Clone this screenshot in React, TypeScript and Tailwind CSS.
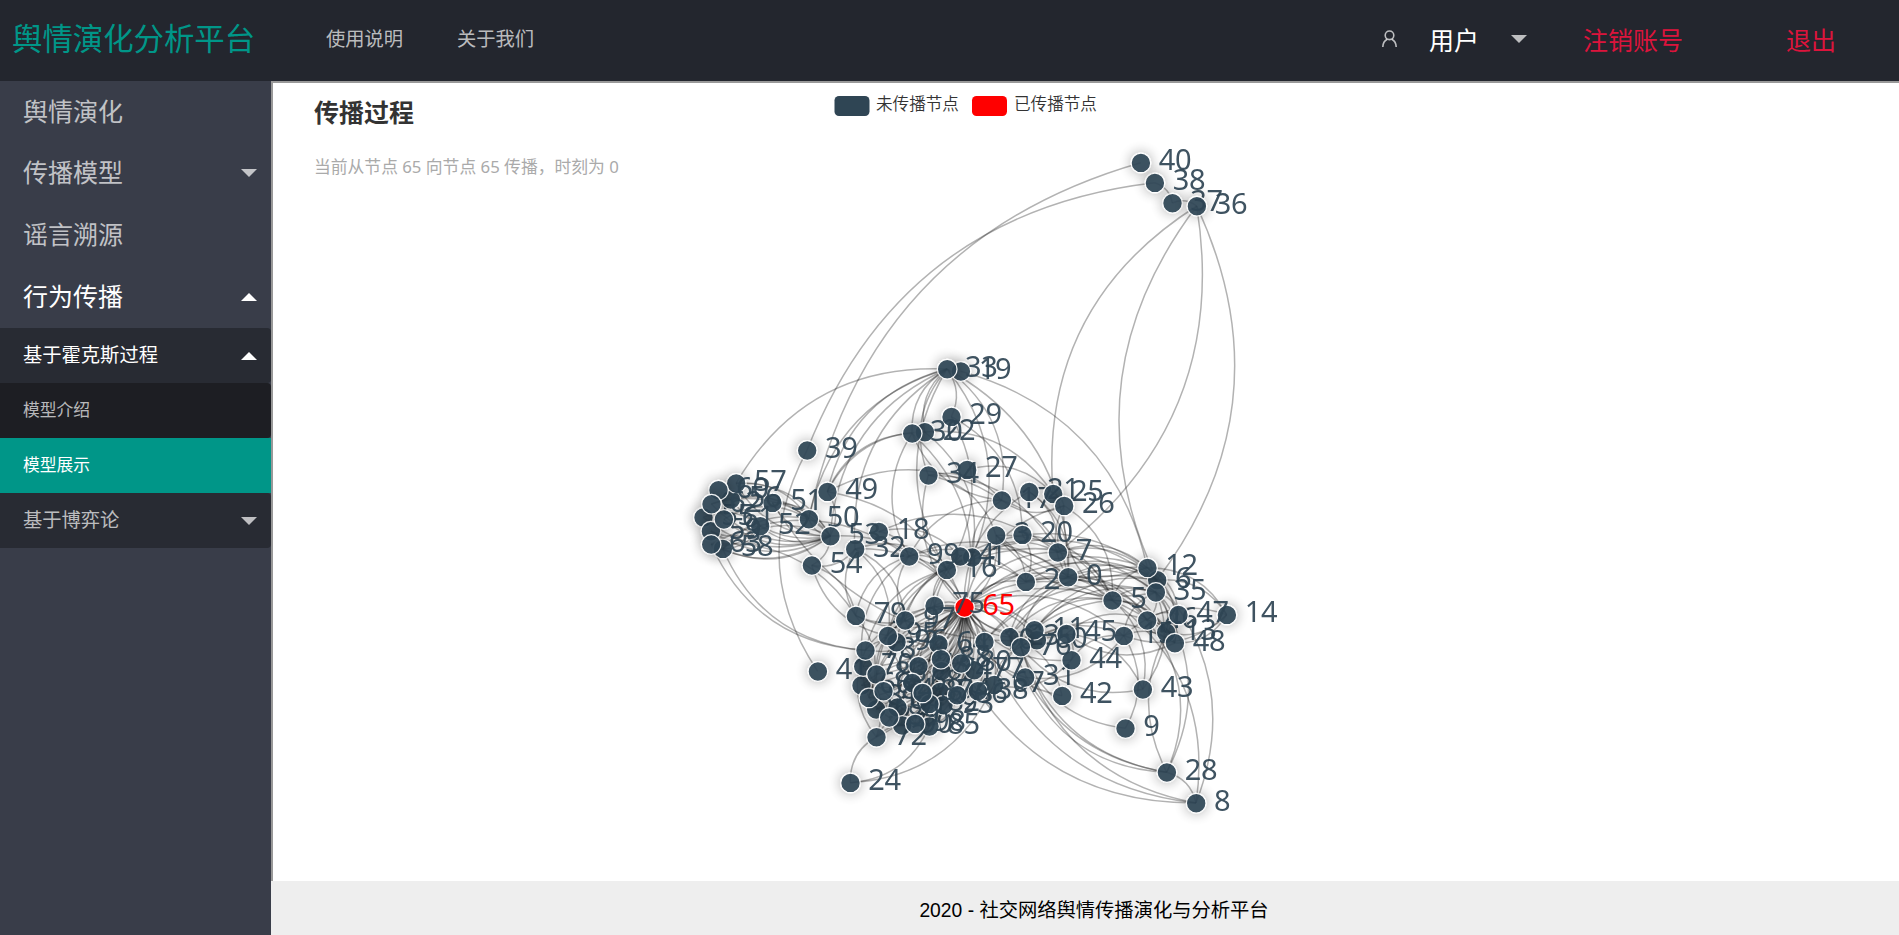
import React from "react";

type GraphNode = [label: string, x: number, y: number];

// Later entries are painted over earlier ones.
const nodes: GraphNode[] = [
  ["0", 1068, 577], ["1", 972, 557.3], ["2", 1025.7, 581.7], ["3", 996, 535.3], ["4", 960, 556.3],
  ["5", 1112.3, 600.3], ["6", 1157, 580], ["7", 1057.7, 552.3], ["8", 1196, 803], ["9", 1125.3, 728.3],
  ["23", 1009.3, 637], ["60", 1036.7, 640], ["11", 1034.3, 630], ["12", 1147.3, 567.7],
  ["13", 1166, 632.3], ["14", 1226.7, 614.7], ["15", 1123.7, 635.7], ["46", 1147, 620.3],
  ["16", 946.7, 569.7], ["17", 1001.7, 500.3], ["18", 878.7, 531.7], ["19", 960.7, 371.3],
  ["20", 1022.3, 534.7], ["21", 1029, 491.7], ["22", 924.7, 432], ["24", 850.3, 782.7],
  ["25", 1053, 493.7], ["26", 1064, 505.7], ["27", 967, 469.7], ["28", 1166.7, 772.3],
  ["29", 951.3, 416.7], ["67", 994, 684.7], ["30", 912, 433.3], ["31", 1025, 677.3],
  ["32", 855, 549], ["33", 947, 369], ["34", 928.3, 475.3], ["35", 1155.7, 592.3],
  ["37", 1172.3, 203], ["36", 1196.7, 206], ["38", 1154.7, 182.7], ["39", 807, 450.3],
  ["40", 1140.7, 162.7], ["41", 817.7, 671.3], ["42", 1062, 695.7], ["43", 1142.7, 689.3],
  ["44", 1071.3, 660], ["45", 1066.3, 633.7], ["47", 1178.3, 614.7], ["48", 1174.7, 643],
  ["49", 827.3, 491.7], ["50", 808.7, 519], ["51", 772.3, 502.7], ["52", 760, 526],
  ["53", 830.3, 536], ["54", 811.7, 565.3], ["55", 703.3, 517.3], ["56", 730.7, 499.3],
  ["57", 736, 483.3], ["58", 722.7, 548.7], ["59", 710.7, 531], ["60", 718.3, 490],
  ["61", 723.7, 519.3], ["62", 711.3, 504], ["63", 711, 544.3],
  ["64", 938.3, 644], ["65", 964.3, 607.3], ["66", 861.3, 685.3], ["70", 863, 666.3],
  ["69", 876, 709.3], ["91", 897.3, 707.3], ["90", 902, 725.3], ["85", 929.3, 726.3],
  ["72", 876.3, 737], ["73", 918.3, 666], ["74", 941.3, 671], ["75", 934.3, 605.7],
  ["68", 912, 682.7], ["94", 940, 691.7], ["93", 943.3, 705], ["77", 974, 670],
  ["10", 984.3, 641.7], ["76", 1020.7, 647], ["78", 865.3, 650.3], ["79", 855.7, 615.7],
  ["80", 961, 663.3], ["81", 868.7, 697.7], ["82", 929.3, 703.7], ["83", 876.3, 674.3],
  ["84", 883.3, 691], ["38", 977.7, 691], ["86", 957, 695], ["87", 922.3, 692.7],
  ["88", 940.7, 659], ["89", 889, 717.3], ["98", 915, 723.7], ["96", 896.3, 642],
  ["95", 887.7, 635.7], ["97", 905, 620.3], ["99", 909, 556.3],
];

type Pt = [number, number];
const at = (label: string): Pt => {
  const n = nodes.find((m) => m[0] === label)!;
  return [n[1], n[2]];
};

const links =
  "39-38 50-40 41-39 38-37 37-36 25-36 6-36 36-6 36-7 " +
  "57-33 53-33 49-33 32-33 50-33 30-33 22-33 34-33 19-12 33-0 16-33 33-1 33-29 33-17 " +
  "17-30 30-65 22-1 29-20 29-16 34-3 34-17 65-34 34-7 27-25 99-30 22-25 49-30 49-22 49-17 49-65 " +
  "53-55 53-56 53-57 53-58 53-59 53-62 53-61 53-63 53-51 53-52 53-50 53-54 49-53 58-53 52-63 52-59 57-53 56-53 60-51 61-50 62-50 55-52 51-53 62-53 " +
  "52-58 57-50 63-79 58-50 63-99 78-63 78-58 53-65 32-65 32-97 32-95 32-54 18-4 18-99 18-7 99-2 99-0 99-65 99-16 32-16 " +
  "79-32 54-79 97-99 95-16 96-1 79-99 70-99 78-16 75-16 97-1 88-4 95-54 74-16 83-1 " +
  "4-12 1-6 16-35 4-0 1-7 16-2 3-5 3-65 3-2 12-3 35-3 26-17 17-0 1-17 21-7 21-0 25-26 20-2 20-5 7-12 7-6 7-5 26-5 0-26 5-26 65-21 99-17 65-26 " +
  "0-35 0-6 0-46 0-13 2-6 2-46 2-13 2-5 5-12 5-35 5-46 5-13 5-48 12-35 12-14 12-47 12-48 6-14 35-46 35-13 35-48 35-47 46-47 46-48 14-13 14-48 15-14 15-48 15-35 14-15 " +
  "65-5 65-6 65-12 65-13 65-15 65-0 65-2 65-7 11-5 11-35 11-6 23-5 23-0 23-12 10-6 10-35 76-15 76-48 76-0 48-45 15-31 45-44 44-15 45-46 44-67 67-76 67-5 " +
  "5-43 15-9 35-43 46-28 35-28 6-8 5-8 28-47 45-43 43-76 23-42 28-8 " +
  "8-80 8-76 8-10 28-31 28-23 28-76 9-76 42-65 44-65 31-65 45-65 " +
  "85-24 67-24 24-72 72-85 72-86 89-85";

const cluster =
  "75 97 95 96 78 79 70 66 83 84 81 69 91 89 90 98 85 72 68 87 82 94 93 86 77 80 88 74 73 64 10 76 23 60 11 67";

const pairs: Pt[][] = links.split(" ").map((l) => l.split("-").map(at));
const clusterIds = cluster.split(" ");
clusterIds.forEach((id, i) => {
  const target: Pt = id === "60" ? [1036.7, 640] : at(id);
  pairs.push([at("65"), target]);
  if (i % 2 === 0) pairs.push([target, at("65")]);
  const next = clusterIds[(i * 7 + 5) % 30];
  if (next !== id && i < 30) pairs.push([target, at(next)]);
});
pairs.push([at("65"), [977.7, 691]]);

// Quadratic link whose control point sits off the chord by 0.3 of its length.
const curve = ([[x1, y1], [x2, y2]]: Pt[]) => {
  const cx = (x1 + x2) / 2 - (y1 - y2) * 0.3;
  const cy = (y1 + y2) / 2 - (x2 - x1) * 0.3;
  return `M${x1} ${y1}Q${cx.toFixed(1)} ${cy.toFixed(1)} ${x2} ${y2}`;
};

function Caret({ up = false }: { up?: boolean }) {
  return (
    <svg width="16" height="8" viewBox="0 0 16 8" fill="currentColor" className="shrink-0">
      <path d={up ? "M8 0L16 8H0Z" : "M0 0H16L8 8Z"} />
    </svg>
  );
}

function MenuItem({ text, className, caret }: { text: string; className: string; caret?: "up" | "down" }) {
  return (
    <li className={"flex shrink-0 items-center justify-between pl-[23px] pr-3.5 " + className}>
      <span className="pb-0.5">{text}</span>
      {caret && <Caret up={caret === "up"} />}
    </li>
  );
}

function Network() {
  return (
    <svg
      viewBox="273 83 1626 798"
      className="h-[798px] w-[1626px] [grid-area:1/1] [font-family:'Noto_Sans','Noto_Sans_CJK_SC',sans-serif]"
    >
      <defs>
        <filter id="glow" x="-150%" y="-150%" width="400%" height="400%">
          <feDropShadow dx="0" dy="0" stdDeviation="6.5" floodColor="#000" floodOpacity="0.36" />
        </filter>
      </defs>
      <g fontSize="16.6" fill="#333" fontWeight="350" className="[font-family:'Noto_Sans_CJK_SC',sans-serif]">
        <rect x="834.5" y="96" width="35" height="20" rx="4.5" fill="#2f4554" />
        <text x="876" y="110">未传播节点</text>
        <rect x="972" y="96" width="35" height="20" rx="4.5" fill="#f00" />
        <text x="1014" y="110">已传播节点</text>
      </g>
      <g fill="none" stroke="#000" strokeOpacity="0.3" strokeWidth="1.5">
        {pairs.map((p, i) => (
          <path key={i} d={curve(p)} />
        ))}
      </g>
      {nodes.map(([label, x, y], i) => {
        const active = label === "65";
        return (
          <g key={i}>
            <circle
              cx={x + 0.2}
              cy={y + 0.2}
              r="9.8"
              fill={active ? "#f00" : "#2f4554"}
              stroke="#fff"
              strokeWidth="1.2"
              opacity={active ? 1 : 0.93}
              filter="url(#glow)"
            />
            <text x={x + 18} y={y + 7.7} fontSize="29" letterSpacing="-0.3" fill={active ? "#f00" : "#2f4554"} opacity={active ? 1 : 0.92}>
              {label}
            </text>
          </g>
        );
      })}
    </svg>
  );
}

export default function App() {
  return (
    <div className="flex h-[935px] w-[1899px] flex-col overflow-hidden bg-white [font-family:'Noto_Sans','Noto_Sans_CJK_SC',sans-serif]">
      <header className="flex h-[81px] shrink-0 items-center bg-[#23262e] pb-1 leading-none text-white/70">
        <h1 className="w-[326px] pl-3 pt-px text-[30.4px] font-normal text-[#009688]">舆情演化分析平台</h1>
        <a className="w-[131px] text-[19.3px]">使用说明</a>
        <a className="w-[925px] text-[19.3px]">关于我们</a>
        <div className="flex w-[201px] items-center">
          <svg width="15" height="18" viewBox="0 0 15 18" fill="none" stroke="currentColor" strokeWidth="1.6" className="mr-8">
            <circle cx="7.5" cy="5.3" r="4.3" />
            <path d="M5.2 9.2C2.4 10.7.9 13.4.8 17M9.8 9.2c2.8 1.5 4.3 4.2 4.4 7.8" />
          </svg>
          <span className="mr-8 pt-1 text-[25px] text-white">用户</span>
          <Caret />
        </div>
        <a className="w-[203px] pt-1 text-[25px] text-[#dc143c]">注销账号</a>
        <a className="pt-1 text-[25px] text-[#dc143c]">退出</a>
      </header>
      <div className="flex min-h-0 flex-1">
        <ul className="flex w-[271px] shrink-0 flex-col bg-[#393d49] leading-none text-white/70">
          <MenuItem text="舆情演化" className="h-[61px] pt-0.5 text-[25px]" />
          <MenuItem text="传播模型" className="h-[62px] text-[25px]" caret="down" />
          <MenuItem text="谣言溯源" className="h-[62px] text-[25px]" />
          <MenuItem text="行为传播" className="h-[62px] text-[25px] text-white" caret="up" />
          <MenuItem text="基于霍克斯过程" className="h-[55px] rounded-r-sm bg-[#282b33] text-[19.3px] text-white" caret="up" />
          <MenuItem text="模型介绍" className="h-[55px] rounded-r-sm bg-[#1d1e23] pt-0.5 text-[16.8px]" />
          <MenuItem text="模型展示" className="h-[55px] bg-[#009688] pt-0.5 text-[16.8px] text-white" />
          <MenuItem text="基于博弈论" className="h-[55px] rounded-r-sm bg-[#282b33] text-[19.3px]" caret="down" />
        </ul>
        <div className="flex flex-1 flex-col">
          <main className="grid h-[800px] shrink-0 grid-cols-1 grid-rows-1 border-l-2 border-t-2 border-[#999] bg-white">
            <Network />
            <div className="pl-[41px] pt-[17px] leading-none [grid-area:1/1]">
              <h2 className="text-[25px] font-bold text-[#333]">传播过程</h2>
              <p className="mt-[34px] text-[16.8px] text-[#aaa]">当前从节点 65 向节点 65 传播，时刻为 0</p>
            </div>
          </main>
          <footer className="flex flex-1 items-center justify-center bg-[#eee] pl-[18px] pt-1.5 text-[19.3px] leading-none text-black [font-family:'Liberation_Sans','Noto_Sans_CJK_SC',sans-serif]">
            <span>2020 - 社交网络舆情传播演化与分析平台</span>
          </footer>
        </div>
      </div>
    </div>
  );
}
